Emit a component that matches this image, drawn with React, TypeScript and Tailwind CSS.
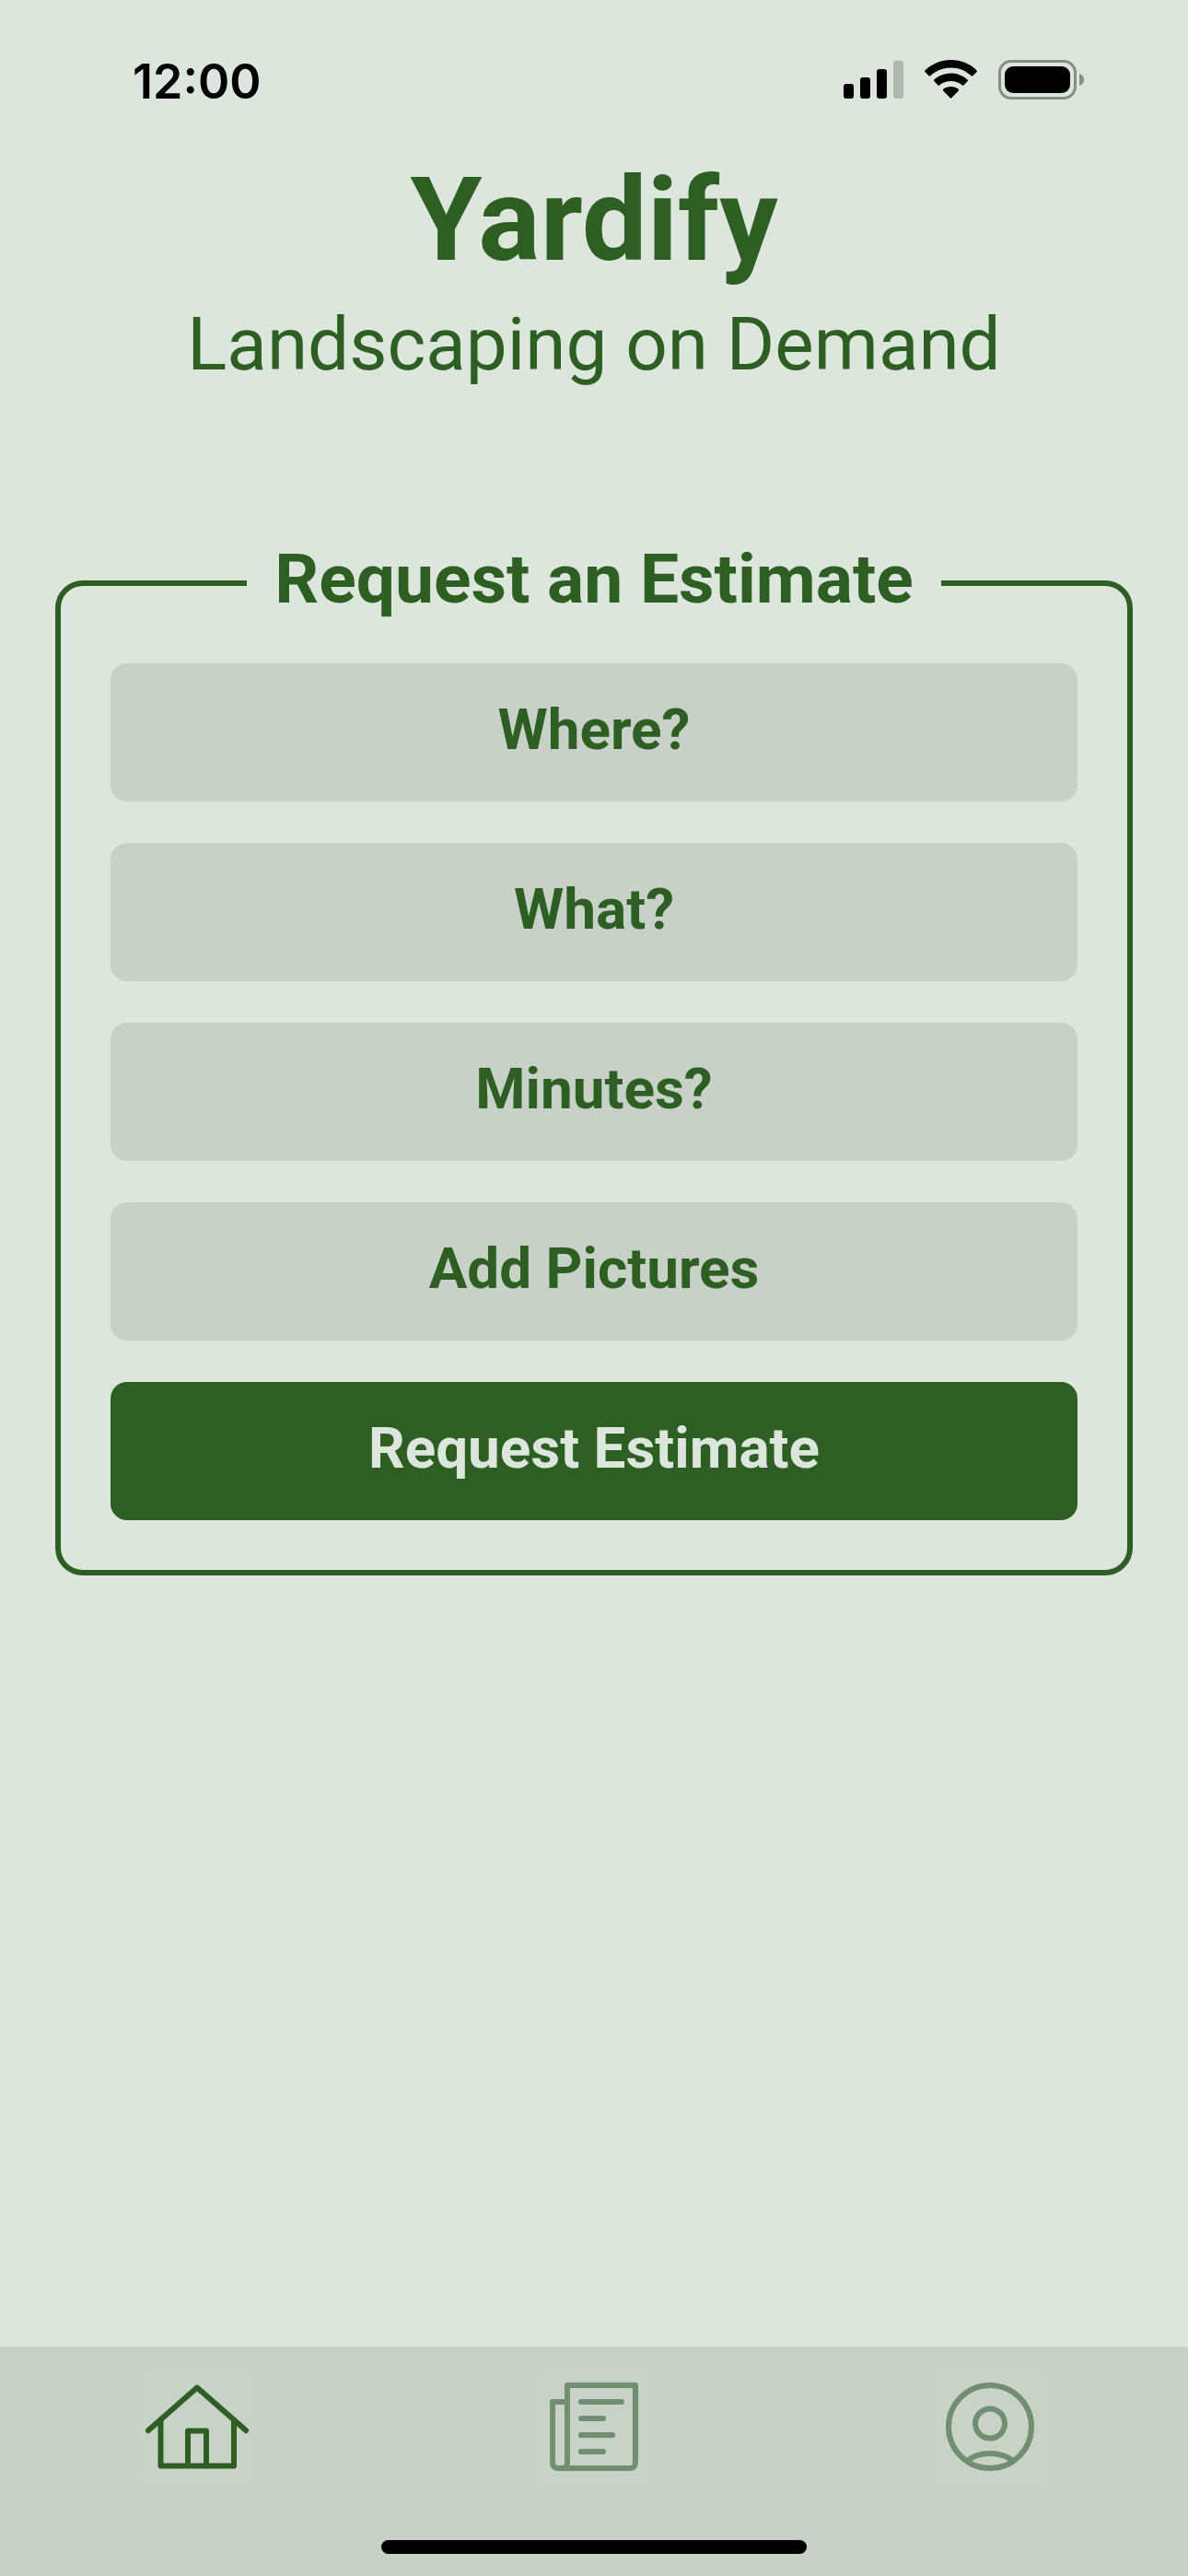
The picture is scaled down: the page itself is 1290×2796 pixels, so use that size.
import { useState } from "react";
import type { ReactNode } from "react";
import classNames from "clsx";

const fields = ["Where?", "What?", "Minutes?", "Add Pictures"];

function StatusBar() {
  return (
    <div className="flex h-[164px] items-start justify-between pl-36 pr-28 pt-[60px]">
      <span className="pt-[2px] font-['Inter',sans-serif] text-[52px] font-semibold leading-[54px] text-black">
        12:00
      </span>
      <div className="flex items-center gap-[23px] pt-1">
        <svg width="65" height="44" viewBox="0 0 65 44">
          <rect x="0" y="27" width="11" height="16" rx="3" />
          <rect x="18" y="20" width="11" height="23" rx="3" />
          <rect x="36" y="11" width="11" height="32" rx="3" />
          <rect x="54" y="2" width="11" height="41" rx="3" fill="#b0b8b1" />
        </svg>
        <svg width="57" height="44" viewBox="0 0 57 44">
          <path d="M28.5 1C39.5 1 49.5 5.3 56.6 12.4C57.1 12.9 57.1 13.5 56.6 14L52.4 18.3C51.9 18.8 51.3 18.8 50.8 18.3C44.8 12.7 37.1 9.4 28.5 9.4S12.2 12.7 6.2 18.3C5.7 18.8 5.1 18.8 4.6 18.3L.4 14C-.1 13.5-.1 12.9.4 12.4C7.5 5.3 17.5 1 28.5 1Z" />
          <path d="M28.5 15.5C35.5 15.5 41.9 18.2 46.7 22.5C47.2 23 47.2 23.6 46.7 24.1L42.5 28.4C42 28.9 41.4 28.9 40.9 28.4C37.5 25.6 33.2 24 28.5 24S19.5 25.6 16.1 28.4C15.6 28.9 15 28.9 14.5 28.4L10.3 24.1C9.8 23.6 9.8 23 10.3 22.5C15.1 18.2 21.5 15.5 28.5 15.5Z" />
          <path d="M28.5 30C31.6 30 34.4 31 36.7 32.7C37.3 33.2 37.3 33.9 36.8 34.4L29.3 42.3C28.8 42.8 28.2 42.8 27.7 42.3L20.2 34.4C19.7 33.9 19.7 33.2 20.3 32.7C22.6 31 25.4 30 28.5 30Z" />
        </svg>
        <svg width="94" height="44" viewBox="0 0 94 44">
          <rect
            x="1.5"
            y="2.5"
            width="82"
            height="40"
            rx="12.5"
            fill="none"
            stroke="#868e87"
            strokeWidth="3"
          />
          <rect x="7" y="8" width="71" height="29" rx="9" />
          <path d="M88 16C91.3 17 93 19.5 93 22.5S91.3 28 88 29Z" fill="#868e87" />
        </svg>
      </div>
    </div>
  );
}

function HomeIcon() {
  return (
    <>
      <path d="M6 64L59 17.5L112 64" />
      <path d="M19.5 53V102.5H99V53" />
      <path d="M49 102V64.5H69V102" />
    </>
  );
}

function NewsIcon() {
  return (
    <>
      <path d="M31 33H15V99C15 102.5 17.5 105 21 105H99C102.5 105 105 102.5 105 99V15H31V99C31 102.5 29 105 25 105" />
      <path d="M46 33H90M46 51H70M46 69H80M46 87H70" />
    </>
  );
}

function ProfileIcon() {
  return (
    <>
      <circle cx="60" cy="60" r="45" />
      <circle cx="60" cy="56.5" r="16" />
      <path d="M35 97C42 91.5 50.5 89 60 89S78 91.5 85 97" />
    </>
  );
}

const tabs: { name: string; icon: ReactNode }[] = [
  { name: "Home", icon: <HomeIcon /> },
  { name: "Requests", icon: <NewsIcon /> },
  { name: "Profile", icon: <ProfileIcon /> },
];

export default function App() {
  const [active, setActive] = useState("Home");

  return (
    <div className="flex min-h-screen flex-col bg-[#dce6dd] font-['Roboto',sans-serif] text-[#2d5f22]">
      <StatusBar />

      <header className="text-center">
        <h1 className="text-[126px] font-bold leading-[150px]">Yardify</h1>
        <p className="text-[80px] leading-[120px]">Landscaping on Demand</p>
      </header>

      <main className="mt-[154px] flex-1 px-[60px]">
        <form onSubmit={(e) => e.preventDefault()}>
          <fieldset className="min-w-0 rounded-[30px] border-[6px] border-[#2d5f22] px-[54px] pb-[54px] pt-[42px]">
            <legend className="mx-auto px-[30px] pb-[10px] text-[75px] font-bold leading-[80px]">
              Request an Estimate
            </legend>
            <div className="flex flex-col gap-[45px]">
              {fields.map((field) => (
                <button
                  key={field}
                  type="button"
                  className="h-[150px] rounded-[18px] bg-[#c8d1c8] pb-2 text-[62px] font-bold"
                >
                  {field}
                </button>
              ))}
              <button
                type="submit"
                className="h-[150px] rounded-[18px] bg-[#2d5f22] pb-2 text-[62px] font-bold text-[#dce6dd]"
              >
                Request Estimate
              </button>
            </div>
          </fieldset>
        </form>
      </main>

      <footer className="bg-[#c8d1c8] pb-6 pt-[27px]">
        <nav className="grid grid-cols-3">
          {tabs.map((tab) => (
            <button
              key={tab.name}
              type="button"
              aria-label={tab.name}
              onClick={() => setActive(tab.name)}
              className={classNames(
                "flex justify-center",
                active === tab.name ? "text-[#2d5f22]" : "text-[#6f8f70]"
              )}
            >
              <svg
                width="120"
                height="120"
                viewBox="0 0 120 120"
                fill="none"
                stroke="currentColor"
                strokeWidth="6"
                strokeLinecap="round"
                strokeLinejoin="round"
                className="bg-[#c8d2c7]"
              >
                {tab.icon}
              </svg>
            </button>
          ))}
        </nav>
        <div className="mx-auto mt-[63px] h-[15px] w-[462px] rounded-full bg-black" />
      </footer>
    </div>
  );
}
